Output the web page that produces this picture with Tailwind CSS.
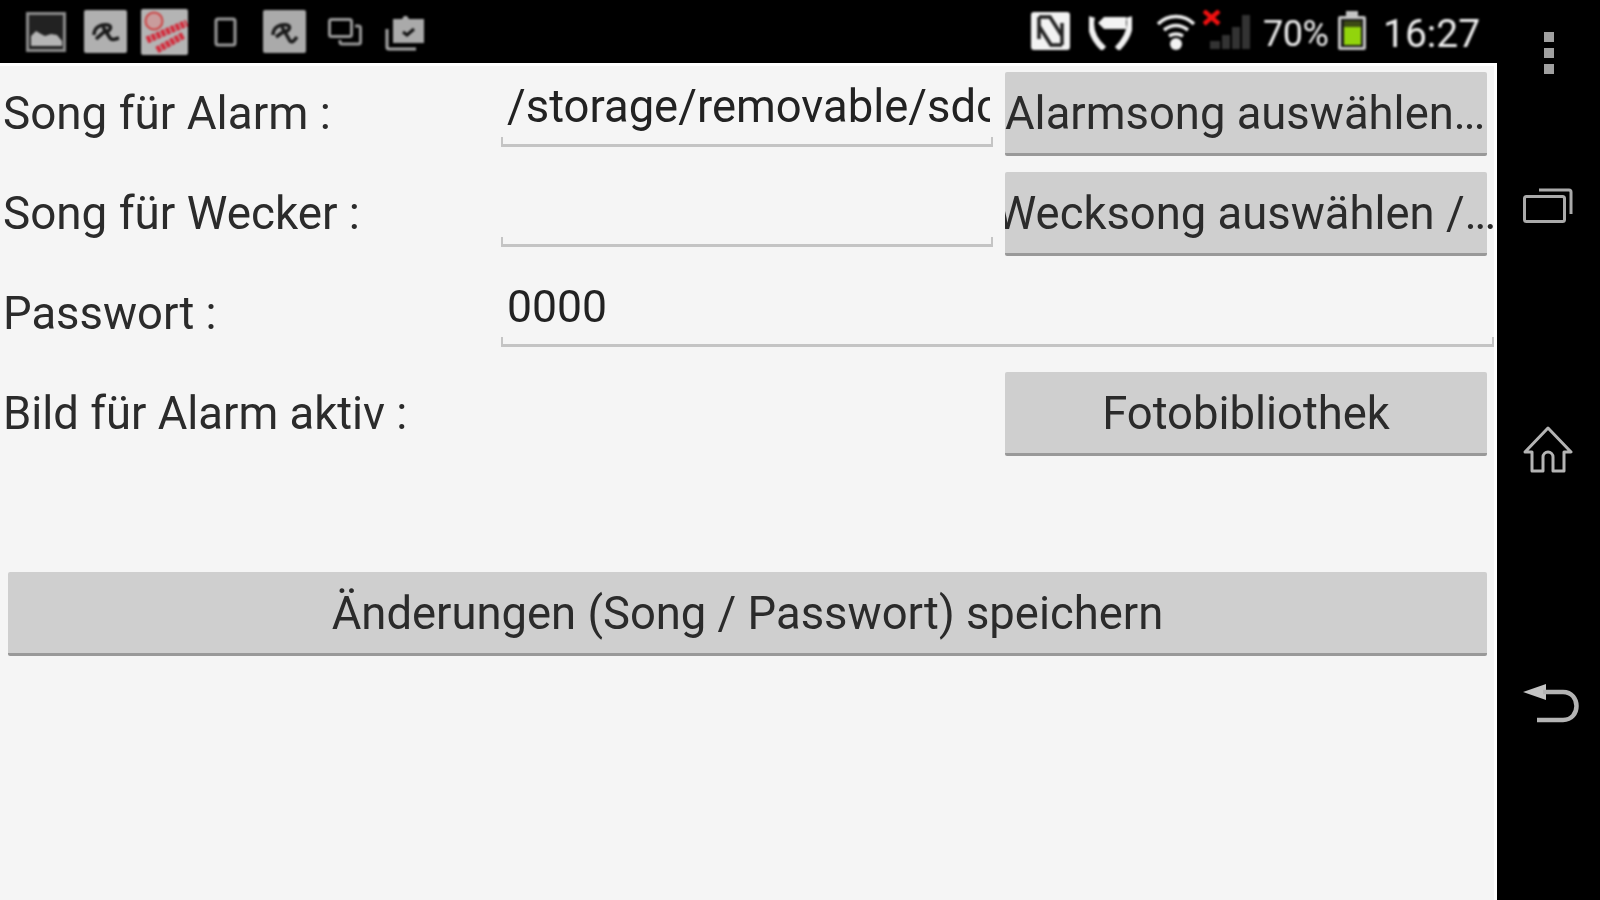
<!DOCTYPE html>
<html lang="de"><head><meta charset="utf-8"><script src="https://cdn.jsdelivr.net/npm/@tailwindcss/browser@4"></script></head>
<body class="m-0 bg-black">
<div class="flex w-[1600px] h-[900px] overflow-hidden bg-black font-['Roboto',sans-serif] text-[45.4px] text-[#2b2b2b]">
  <div class="flex flex-col w-[1497px] h-full">
    <header class="flex items-start h-[63px] shrink-0 bg-black blur-[0.8px] text-[#f0f0f0]">
      <svg class="ml-[26px] mt-[12px] shrink-0" width="40" height="40" viewBox="0 0 40 40"><rect x="1.500" y="1.500" width="37" height="37" fill="#222" stroke="#8c8c8c" stroke-width="3"/><path d="M5 34V24l5-5 5 3 4 2 6-2 6 1 5 6v5z" fill="#b5b5b5"/></svg>
      <svg class="ml-[18px] mt-[10px] shrink-0" width="43" height="43" viewBox="0 0 43 43"><rect width="43" height="43" rx="2" fill="#b0b0b0"/><path d="M10 25C10 17 17 14 24 15 29 16 26 22 20 22L12 29M19 17 26 28C28 31 31 29 35 28" fill="none" stroke="#1a1a1a" stroke-width="3.500"/></svg>
      <svg class="ml-[14px] mt-[9px] shrink-0" width="47" height="46" viewBox="0 0 47 46"><rect width="47" height="46" rx="2" fill="#b4b4b4"/><circle cx="13" cy="12" r="8.500" fill="#c99c9c" stroke="#c44" stroke-width="2"/><path d="M6 31 46 14M16 41 43 26" stroke="#d22c3c" stroke-width="7" stroke-dasharray="4 1.200" fill="none"/></svg>
      <svg class="ml-[26px] mt-[17px] shrink-0" width="23" height="30" viewBox="0 0 23 30"><rect x="2" y="2" width="19" height="26" rx="2" fill="none" stroke="#999" stroke-width="3"/></svg>
      <svg class="ml-[26px] mt-[10px] shrink-0" width="43" height="43" viewBox="0 0 43 43"><rect width="43" height="43" rx="2" fill="#aaa"/><path d="M10 25C10 17 17 14 24 15 29 16 26 22 20 22L13 27M19 17 27 31C29 33 31 31 34 27" fill="none" stroke="#1a1a1a" stroke-width="3.500"/></svg>
      <svg class="ml-[22px] mt-[18px] shrink-0" width="34" height="28" viewBox="0 0 34 28"><rect x="1.500" y="1.500" width="22" height="17" rx="2" fill="none" stroke="#999" stroke-width="3"/><path d="M27 8h3.500a2 2 0 0 1 2 2v14a2 2 0 0 1-2 2H14a2 2 0 0 1-2-2v-2" fill="none" stroke="#999" stroke-width="3"/></svg>
      <svg class="ml-[23px] mt-[14px] shrink-0" width="41" height="37" viewBox="0 0 41 37"><path d="M8 5h9l2-3h3l2 3h15v24H8z" fill="#aaa"/><path d="m18 18 4 3 7-6" fill="none" stroke="#111" stroke-width="3"/><path d="M2 15v18a2 2 0 0 0 2 2h27" fill="none" stroke="#aaa" stroke-width="3"/></svg>
      <svg class="ml-[605px] mt-[12px] shrink-0" width="39" height="38" viewBox="0 0 39 38"><rect width="39" height="38" rx="3" fill="#f2f2f2"/><path d="M8 5V27M31 33V11M8 5H19L31 24M31 33H20L8 14" fill="none" stroke="#222" stroke-width="3.500"/></svg>
      <svg class="ml-[19px] mt-[14px] shrink-0" width="43" height="36" viewBox="0 0 43 36"><path d="M9 9 15 3H37V15H15z" fill="#f2f2f2"/><path d="M3 3C0 15 4 25 15 35M40 3C43 15 38 25 28 35" fill="none" stroke="#f2f2f2" stroke-width="6"/></svg>
      <svg class="ml-[24px] mt-[13px] shrink-0" width="40" height="37" viewBox="0 0 40 37"><path d="M2 11C12 1 28 1 38 11M8 17C16 11 24 11 32 17M13 23C18 20 22 20 27 23" fill="none" stroke="#f2f2f2" stroke-width="3.500"/><circle cx="20" cy="31" r="6" fill="#f2f2f2"/></svg>
      <svg class="ml-[7px] mt-[10px] shrink-0" width="47" height="39" viewBox="0 0 47 39"><path d="M1 1 16 14M16 1 1 14" stroke="#f01010" stroke-width="4.500"/><path d="M7 31H17V39H7zM19 25H27V39H19zM29 17H37V39H29zM39 5H47V39H39z" fill="#333"/></svg>
      <span class="ml-[13px] mt-[9px] leading-[50px] text-[36px] tracking-[-0.5px] w-[66px] shrink-0 whitespace-nowrap">70%</span>
      <svg class="ml-[9px] mt-[11px] shrink-0" width="28" height="39" viewBox="0 0 28 39"><path d="M8 0h12v5h6a2 2 0 0 1 2 2v30a2 2 0 0 1-2 2H2a2 2 0 0 1-2-2V7a2 2 0 0 1 2-2h6z" fill="#c4c4c4"/><rect x="3" y="8" width="22" height="28" fill="#1a1a1a"/><rect x="6" y="10" width="17" height="6" fill="#3c4a14"/><rect x="6" y="16" width="17" height="18" fill="#92d40c"/></svg>
      <span class="ml-[17px] mt-[9px] leading-[50px] text-[39px] whitespace-nowrap">16:27</span>
    </header>
    <main class="flex-1 flex flex-col bg-[#f5f5f5] border-t-[3px] border-r-[3px] border-white pt-[6px] pl-[3px] blur-[0.7px]">
      <div class="flex items-center h-[84px] mb-[16px]">
        <span class="w-[498px] shrink-0 whitespace-nowrap pt-[1px] text-[45.8px]">Song für Alarm :</span>
        <div class="w-[504px] shrink-0 h-full">
          <div class="h-[65px] w-[495px] px-[6px] leading-[70px] whitespace-nowrap text-[#222]"><span class="block overflow-hidden">/storage/removable/sdcard1/Music</span></div>
          <div class="w-[492px] h-[10px] border-x-2 border-b-[3px] border-[#c4c4c4]"></div>
        </div>
        <button class="w-[482px] h-full bg-[#cfcfcf] border-b-[3px] border-[#999] rounded-[2px] text-left pt-[4px] whitespace-nowrap overflow-hidden">Alarmsong auswählen<span class="tracking-[-2px]">...</span></button>
      </div>
      <div class="flex items-center h-[84px] mb-[16px]">
        <span class="w-[498px] shrink-0 whitespace-nowrap pt-[1px] text-[45.8px]">Song für Wecker :</span>
        <div class="w-[504px] shrink-0 h-full">
          <div class="h-[65px]"></div>
          <div class="w-[492px] h-[10px] border-x-2 border-b-[3px] border-[#c4c4c4]"></div>
        </div>
        <button class="w-[482px] h-full bg-[#cfcfcf] border-b-[3px] border-[#999] rounded-[2px] text-left pt-[4px] whitespace-nowrap [clip-path:inset(-5px_-12px_-5px_0)]"><span class="-ml-[9px] inline-block">Wecksong auswählen /<span class="tracking-[-2px]">...</span></span></button>
      </div>
      <div class="flex items-center h-[84px] mb-[16px]">
        <span class="w-[498px] shrink-0 whitespace-nowrap pt-[1px]">Passwort :</span>
        <div class="w-[993px] shrink-0 h-full">
          <div class="h-[65px] pl-[6px] leading-[70px] text-[44.5px] text-[#222]">0000</div>
          <div class="w-[993px] h-[10px] border-x-2 border-b-[3px] border-[#c4c4c4]"></div>
        </div>
      </div>
      <div class="flex items-center h-[84px] mb-[116px]">
        <span class="w-[1002px] shrink-0 whitespace-nowrap pt-[1px]">Bild für Alarm aktiv :</span>
        <button class="w-[482px] h-full bg-[#cfcfcf] border-b-[3px] border-[#999] rounded-[2px] text-center pt-[4px]">Fotobibliothek</button>
      </div>
      <button class="ml-[5px] w-[1479px] h-[84px] shrink-0 bg-[#cfcfcf] border-b-[3px] border-[#999] rounded-[2px] text-center pt-[4px]">Änderungen (Song / Passwort) speichern</button>
    </main>
  </div>
  <nav class="flex flex-col w-[103px] h-full bg-black blur-[0.7px]">
    <div class="ml-[47px] mt-[32px] flex flex-col gap-[6px]">
      <div class="w-[10px] h-[10px] bg-[#a0a0a0]"></div><div class="w-[10px] h-[10px] bg-[#a0a0a0]"></div><div class="w-[10px] h-[10px] bg-[#a0a0a0]"></div>
    </div>
    <svg class="ml-[26px] mt-[114px]" width="50" height="36" viewBox="0 0 50 36"><rect x="1.500" y="8.500" width="40" height="25" rx="2" fill="none" stroke="#aaa" stroke-width="3"/><path d="M16 2h30a2 2 0 0 1 2 2v22" fill="none" stroke="#aaa" stroke-width="3"/></svg>
    <svg class="ml-[26px] mt-[202px]" width="50" height="47" viewBox="0 0 50 47"><path d="M25 2 48 26H41V45H30V31a5 5 0 0 0-10 0V45H9V26H2z" fill="none" stroke="#b4b4b4" stroke-width="3" stroke-linejoin="round"/></svg>
    <svg class="ml-[26px] mt-[211px]" width="56" height="40" viewBox="0 0 56 40"><path d="M0 8 23 0V16z" fill="#c4c4c4"/><path d="M20 8h20c18 0 18 28 0 28H14" fill="none" stroke="#b4b4b4" stroke-width="4.500"/></svg>
  </nav>
</div>
</body></html>
